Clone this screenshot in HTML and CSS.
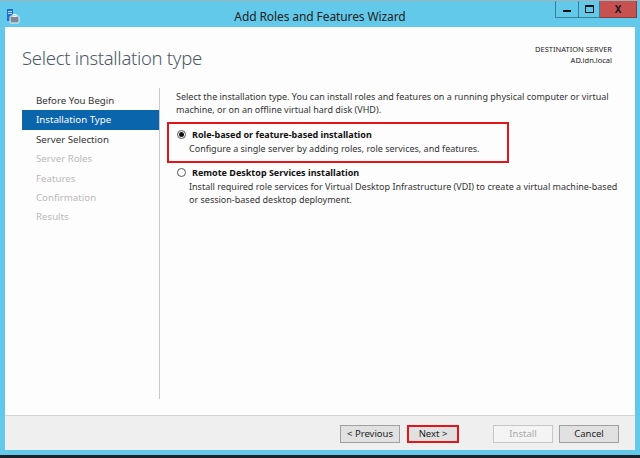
FILE: index.html
```html
<!DOCTYPE html>
<html lang="en">
<head>
    <meta charset="UTF-8">
    <title>Add Roles and Features Wizard</title>
    <link rel="stylesheet" href="styles.css">
</head>
<body>
<div class="window">
  <div class="titlebar">
    <div class="app-icon">
      <svg width="14" height="15" viewBox="0 0 14 15">
        <rect x="1" y="0" width="6" height="12" fill="#1b6fc4"/>
        <rect x="2" y="2" width="4" height="1" fill="#bfe3ff"/>
        <rect x="2" y="4" width="4" height="1" fill="#bfe3ff"/>
        <rect x="4" y="7" width="9" height="7" rx="1" fill="#7d8a96" stroke="#eef3f7" stroke-width="1"/>
        <rect x="7" y="5.5" width="3" height="2" fill="none" stroke="#eef3f7" stroke-width="1"/>
      </svg>
    </div>
    <div class="title">Add Roles and Features Wizard</div>
    <div class="controls">
      <div class="ctl ctl-min"><span class="dash"></span></div>
      <div class="ctl ctl-max"><span class="box"></span></div>
      <div class="ctl ctl-close">X</div>
    </div>
  </div>

  <div class="page">
    <div class="page-head">
      <h1>Select installation type</h1>
      <div class="dest">
        <div>DESTINATION SERVER</div>
        <div>AD.idn.local</div>
      </div>
    </div>

    <div class="page-main">
      <ul class="steps">
        <li>Before You Begin</li>
        <li class="active">Installation Type</li>
        <li>Server Selection</li>
        <li class="off">Server Roles</li>
        <li class="off">Features</li>
        <li class="off">Confirmation</li>
        <li class="off">Results</li>
      </ul>

      <div class="content">
        <p class="intro">Select the installation type. You can install roles and features on a running physical computer or virtual machine, or on an offline virtual hard disk (VHD).</p>

        <div class="option picked">
          <div class="opt-label"><span class="radio on"></span>Role-based or feature-based installation</div>
          <div class="opt-desc">Configure a single server by adding roles, role services, and features.</div>
        </div>

        <div class="option">
          <div class="opt-label"><span class="radio"></span>Remote Desktop Services installation</div>
          <div class="opt-desc">Install required role services for Virtual Desktop Infrastructure (VDI) to create a virtual machine-based or session-based desktop deployment.</div>
        </div>
      </div>
    </div>
  </div>

  <div class="footer">
    <button class="btn btn-prev">&lt; Previous</button>
    <button class="btn btn-next">Next &gt;</button>
    <button class="btn btn-off">Install</button>
    <button class="btn">Cancel</button>
  </div>
  <div class="taskbar"></div>
</div>
</body>
</html>
```

FILE: styles.css
```css
/* whole window */
body {
    margin: 0;
    font-family: "Noto Sans", "Open Sans", sans-serif;
}
.window {
    width: 640px;
    height: 458px;
    background: #63c9ea;
    display: flex;
    flex-direction: column;
    border-top: 1px solid #9fb3bb;
    box-sizing: border-box;
}

/* title bar */
.titlebar {
    height: 26px;
    display: grid;
    grid-template-columns: 1fr auto 1fr;
    align-items: start;
}
.app-icon {
    padding: 6px 0 0 6px;
}
.title {
    font-size: 12px;
    color: #222;
    padding-top: 7px;
    letter-spacing: -0.1px;
}
.controls {
    display: flex;
    justify-content: flex-end;
    padding-right: 3px;
}
.ctl {
    height: 17px;
    border: 1px solid #3b7f97;
    border-top: none;
    display: flex;
    align-items: center;
    justify-content: center;
    box-sizing: border-box;
}
.ctl-min { width: 24px; }
.ctl-max { width: 21px; border-left: none; }
.ctl-close {
    width: 37px;
    border-left: none;
    border-color: #8c3a34;
    background: #c75050;
    color: #1a1a1a;
    font-size: 10px;
    font-weight: bold;
}
.dash {
    width: 8px;
    height: 2px;
    background: #111;
    margin-top: 3px;
}
.box {
    width: 7px;
    height: 5px;
    border: 1px solid #111;
    border-top-width: 2px;
}

/* white page */
.page {
    margin: 0 5px;
    height: 388px;
    background: #fdfdfd;
    display: flex;
    flex-direction: column;
}
.page-head {
    display: flex;
    justify-content: space-between;
    padding: 0 23px 0 17px;
    height: 61px;
}
h1 {
    margin: 18px 0 0;
    font-weight: 300;
    font-size: 18.5px;
    color: #4d5b68;
    letter-spacing: -0.3px;
}
.dest {
    margin-top: 17px;
    text-align: right;
    font-size: 7.5px;
    line-height: 11px;
    color: #222;
}

.page-main {
    flex: 1;
    display: flex;
    padding-bottom: 16px;
}

/* left steps list */
.steps {
    list-style: none;
    margin: 0;
    padding: 3px 0 0 17px;
    width: 137px;
    flex-shrink: 0;
    border-right: 1px solid #c9c9c9;
    font-size: 9.7px;
}
.steps li {
    height: 19.4px;
    line-height: 19px;
    padding-left: 14px;
    color: #333;
}
.steps li.active {
    background: #0b65ad;
    color: #fff;
}
.steps li.off {
    color: #b9b9b9;
}

/* right side */
.content {
    flex: 1;
    padding: 2px 18px 0 16px;
    font-size: 9px;
    color: #333;
}
.intro {
    margin: 0 0 6px;
    line-height: 13px;
}
.option {
    padding: 3px 0 6px 8px;
    border: 2px solid transparent;
    margin-left: -9px;
    width: 330px;
}
.option.picked {
    border-color: #e4141b;
}
.opt-label {
    font-weight: bold;
    color: #111;
    line-height: 15px;
    display: flex;
    align-items: center;
}
.opt-desc {
    padding-left: 12px;
    line-height: 13px;
}
.option + .option {
    width: 450px;
    padding-top: 0;
}
.radio {
    width: 9px;
    height: 9px;
    border: 1px solid #555;
    border-radius: 50%;
    box-sizing: border-box;
    margin-right: 6px;
    display: flex;
    align-items: center;
    justify-content: center;
    background: #fff;
}
.radio.on::after {
    content: "";
    width: 5px;
    height: 5px;
    border-radius: 50%;
    background: #111;
}

/* bottom buttons */
.footer {
    margin: 0 5px;
    height: 35px;
    background: #efefef;
    border-top: 1px solid #d6d6d6;
    box-sizing: border-box;
    display: flex;
    justify-content: flex-end;
    align-items: center;
    padding: 1px 16px 0 0;
    gap: 6px;
}
.btn {
    font-family: inherit;
    font-size: 9.5px;
    width: 60px;
    height: 18px;
    padding: 0;
    background: #e1e1e1;
    border: 1px solid #a0a0a0;
    color: #222;
}
.btn-prev {
    margin-right: 1px;
}
.btn-next {
    width: 52px;
    border: 2px solid #e4141b;
    margin-right: 28px;
}
.btn-off {
    background: #f4f4f4;
    border-color: #c6c6c6;
    color: #a8a8a8;
}
.taskbar {
    margin-top: 5px;
    flex: 1;
    background: #1c2127;
}
```
